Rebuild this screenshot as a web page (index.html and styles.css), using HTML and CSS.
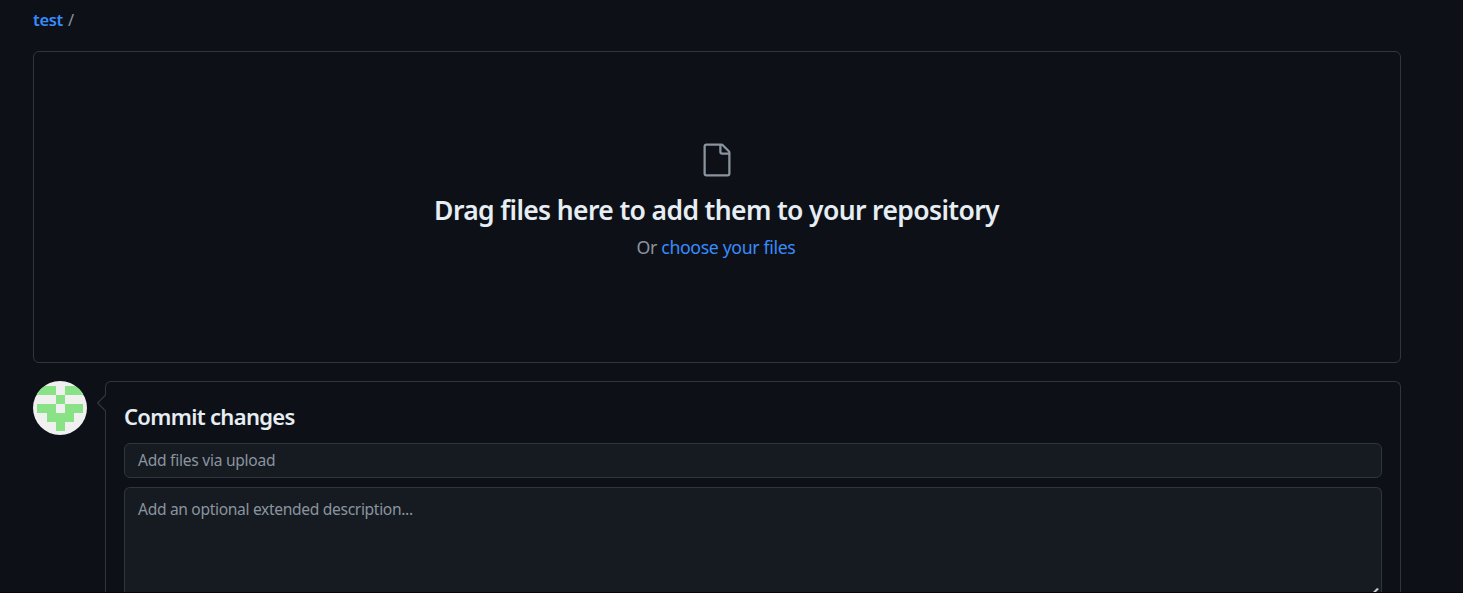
FILE: index.html
```html
<!DOCTYPE html>
<html lang="en">
<head>
<meta charset="utf-8">
<title>Upload files</title>
<link rel="stylesheet" href="styles.css">
</head>
<body>
<main class="page">
  <nav class="breadcrumb"><a class="repo" href="#">test</a><span class="slash">/</span></nav>
  <section class="dropzone">
    <svg class="file-icon" viewBox="0 0 24 24" aria-hidden="true"><path d="M3 3a2 2 0 0 1 2-2h9.982a2 2 0 0 1 1.414.586l4.018 4.018A2 2 0 0 1 21 7.018V21a2 2 0 0 1-2 2H5a2 2 0 0 1-2-2Zm2-.5a.5.5 0 0 0-.5.5v18a.5.5 0 0 0 .5.5h14a.5.5 0 0 0 .5-.5V8.500h-4a2 2 0 0 1-2-2v-4Zm10 0v4a.5.5 0 0 0 .5.5h4a.5.5 0 0 0-.146-.336l-4.018-4.018A.5.5 0 0 0 15 2.500Z"/></svg>
    <h2 class="drop-title">Drag files here to add them to your repository</h2>
    <p class="drop-hint">Or <a href="#">choose your files</a></p>
  </section>
  <div class="commit">
    <svg class="avatar" viewBox="0 0 54 54" shape-rendering="crispEdges" aria-hidden="true">
      <rect width="54" height="54" fill="#f0f0f0"/>
      <path fill="#8ae287" d="M4 4.500h18.500v9H4zM31.500 4.500h18.500v9H31.500zM22.500 13.500h9v9h-9zM4 22.500h18.500v9H4zM31.500 22.500h18.500v9H31.500zM13.500 31.500h27v9h-27zM22.500 40.500h9v9h-9z"/>
    </svg>
    <form class="commit-box">
      <svg class="pointer" viewBox="0 0 9 16" aria-hidden="true"><path class="pointer-fill" d="M9 .5H8.500L.7 8L8.500 15.500H9z"/><path class="pointer-line" d="M8.500 0L.7 8L8.500 16"/></svg>
      <h3 class="commit-title">Commit changes</h3>
      <div class="field summary">Add files via upload</div>
      <div class="field description">Add an optional extended description...
        <svg class="grip" viewBox="0 0 6 4" aria-hidden="true"><path d="M0 4L4 0L6 1L3 4z"/></svg>
      </div>
    </form>
  </div>
</main>
<div class="edge"></div>
</body>
</html>
```
FILE: styles.css
```css
* { box-sizing: border-box; }
body {
  margin: 0;
  background: #0d1117;
  color: #e6edf3;
  font-family: "Segoe UI", "Noto Sans", sans-serif;
}
a { color: #388bfd; text-decoration: none; }
h2, h3, p { margin: 0; }
.page { padding: 6px 62px 0 33px; height: 593px; overflow: hidden; }
.breadcrumb { display: flex; gap: 5px; height: 27px; font-size: 16.500px; line-height: 27px; }
.repo { font-weight: 600; letter-spacing: -0.3px; }
.slash { color: #8b949e; }
.dropzone {
  height: 312px;
  margin-top: 18px;
  padding-top: 90px;
  border: 1px solid #30363d;
  border-radius: 6px;
  display: flex;
  flex-direction: column;
  align-items: center;
}
.file-icon { width: 36px; height: 36px; fill: #8b949e; flex: none; }
.drop-title { margin: 12px 1px 0 0; font-size: 26.500px; line-height: 40px; font-weight: 600; letter-spacing: -0.63px; white-space: nowrap; }
.drop-hint { margin: 4px 2px 0 0; font-size: 17.750px; line-height: 27px; letter-spacing: -0.38px; color: #8b949e; white-space: nowrap; }
.commit { display: flex; gap: 18px; margin-top: 18px; }
.avatar { width: 54px; height: 54px; border-radius: 50%; flex: none; }
.commit-box {
  position: relative;
  flex: 1;
  height: 212px;
  padding: 17px 18px 0;
  border: 1px solid #30363d;
  border-bottom: 0;
  border-radius: 6px 6px 0 0;
}
.pointer { position: absolute; left: -9px; top: 13px; width: 9px; height: 16px; }
.pointer-fill { fill: #0d1117; }
.pointer-line { fill: none; stroke: #30363d; stroke-width: 1.200; }
.commit-title { height: 34px; font-size: 22px; line-height: 34px; font-weight: 600; letter-spacing: -0.68px; }
.field {
  padding: 0 13px;
  border: 1px solid #30363d;
  border-radius: 6px;
  background: #161b22;
  color: #8b949e;
  font-size: 15.600px;
  letter-spacing: -0.33px;
}
.summary { margin-top: 10px; height: 35px; line-height: 33px; letter-spacing: -0.27px; }
.description { position: relative; margin-top: 9px; height: 105px; padding-top: 8px; line-height: 27px; border-bottom: 0; border-radius: 6px 6px 0 0; }
.grip { position: absolute; right: 2px; bottom: 0; width: 6px; height: 4px; fill: #c8c8c8; }
.edge { position: fixed; left: 0; right: 0; bottom: 0; height: 1px; background: #10000c; }
```
